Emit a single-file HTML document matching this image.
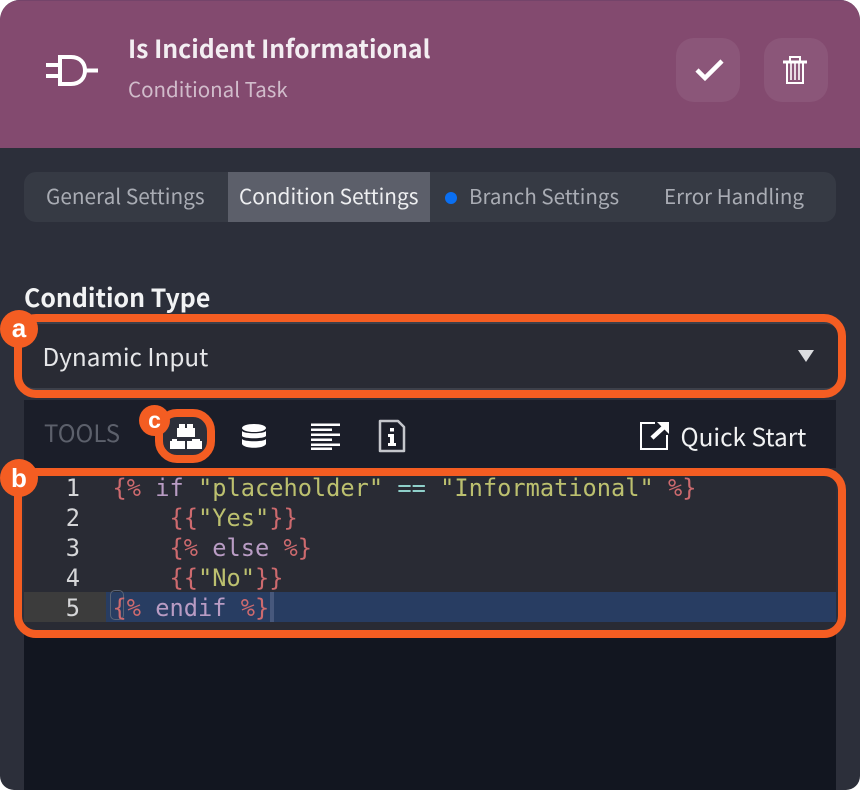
<!DOCTYPE html>
<html><head><meta charset="utf-8"><style>
html,body{margin:0;padding:0;width:860px;height:790px;background:#fff;overflow:hidden}
#p{position:relative;width:860px;height:790px;background:#2c2f3a;border-radius:20px 20px 14px 14px;overflow:hidden;font-family:"Noto Sans CJK JP","Liberation Sans",sans-serif}
#p div,#p svg{position:absolute}
.t{white-space:nowrap;line-height:30px;height:30px}
.m{font-family:"DejaVu Sans Mono","Liberation Mono",monospace;font-size:23.67px;line-height:30px;height:30px;white-space:pre;color:#bcc06f}
.r{color:#cd6a6e}.k{color:#b99cc4}.o{color:#8fd0ca}
.n{font-family:"DejaVu Sans Mono","Liberation Mono",monospace;font-size:23.67px;line-height:30px;height:30px;color:#d5d6d8;width:55px;left:25px;text-align:right}
.b{background:#f45d22;border-radius:50%;color:#fff;text-align:center;font-family:"Liberation Sans",sans-serif;font-weight:700}
</style></head><body><div id="p">
<div style="left:0;top:0;width:860px;height:148px;background:#834a6f;border-top:1px solid #74446a;box-sizing:border-box"></div>
<svg style="left:44px;top:52px" width="56" height="38" viewBox="0 0 56 38" fill="none" stroke="#fff" stroke-width="4"><path d="M16 5H27C36 5 41 11 41 18.500S36 32 27 32H16Z"/><path d="M2 13H16M2 24H16M41 18.500H54"/></svg>
<div class="t" style="left:128px;top:33px;font-size:24.8px;font-weight:700;color:#f3eef2">Is Incident Informational</div>
<div class="t" style="left:128px;top:72.500px;font-size:20.5px;color:#d1bccb">Conditional Task</div>
<div style="left:676px;top:38px;width:64px;height:64px;border-radius:18px;background:rgba(255,255,255,.07)"></div>
<div style="left:764px;top:38px;width:64px;height:64px;border-radius:18px;background:rgba(255,255,255,.07)"></div>
<svg style="left:690px;top:52px" width="38" height="36" viewBox="0 0 38 36" fill="none" stroke="#fff" stroke-width="4.500"><path d="M7 18L15 26L32 9"/></svg>
<svg style="left:780px;top:54px" width="32" height="34" viewBox="0 0 32 34" fill="none" stroke="#fff"><path d="M3 8H27" stroke-width="3"/><path d="M10 7V3H20V7" stroke-width="2"/><path d="M7 8V29H23V8" stroke-width="2"/><path d="M11 9V26M15 9V26M19 9V26" stroke-width="1.600"/></svg>

<div style="left:24px;top:172px;width:812px;height:50px;background:#363a44;border-radius:12px"></div>
<div style="left:228px;top:172px;width:202px;height:50px;background:#5c5f6a"></div>
<div class="t" style="left:46px;top:180px;font-size:20.8px;color:#a9acb4">General Settings</div>
<div class="t" style="left:239px;top:180px;font-size:20.8px;color:#eeeff1">Condition Settings</div>
<div style="left:445px;top:192px;width:12px;height:12px;border-radius:50%;background:#0a6ff2"></div>
<div class="t" style="left:469px;top:180px;font-size:20.5px;color:#a9acb4">Branch Settings</div>
<div class="t" style="left:664px;top:180px;font-size:20.5px;color:#a9acb4">Error Handling</div>

<div class="t" style="left:24px;top:282px;font-size:24.9px;font-weight:700;color:#f2f3f4">Condition Type</div>
<div style="left:22px;top:322px;width:816px;height:68px;background:#292b34;border-top:2px solid #3d404a;border-bottom:2px solid #3d404a;box-sizing:border-box;border-radius:12px"></div>
<div class="t" style="left:42.500px;top:341px;font-size:24.300px;color:#e6e7e9">Dynamic Input</div>
<svg style="left:797px;top:349px" width="18" height="14"><path d="M1 1H17L9 13Z" fill="#dcdde0"/></svg>

<div style="left:24px;top:400px;width:812px;height:68px;background:#1b1e29"></div>
<div class="t" style="left:44px;top:417px;font-size:24px;color:#5c606b">TOOLS</div>
<div style="left:155px;top:409px;width:60px;height:54px;box-sizing:border-box;border:8px solid #f45d22;border-radius:22px;background:#2c2f3a"></div>
<svg style="left:168px;top:421px" width="36" height="30" viewBox="0 0 36 30" fill="#fff"><path d="M9 16V7H11V3H17V7H19V3H25V7H27V16Z"/><path d="M2 28V20H4V18H9V20H17V28Z"/><path d="M19 28V20H24V18H32V20H34V28Z"/></svg>
<svg style="left:240px;top:422px" width="28" height="28" viewBox="0 0 28 28" fill="#fff"><ellipse cx="14" cy="6" rx="12" ry="4"/><path d="M2 9C4 12 24 12 26 9V14C24 17 4 17 2 14Z"/><path d="M2 17C4 20 24 20 26 17V22C24 27 4 27 2 22Z"/></svg>
<svg style="left:310px;top:422px" width="32" height="28" fill="#fff"><path d="M1 1.500H30V4H1ZM1 6.500H22V9H1ZM1 11.500H30V14H1ZM1 16.500H22V19H1ZM1 21.500H30V24H1ZM1 25.500H22V28H1Z"/></svg>
<svg style="left:377px;top:419px" width="30" height="34" viewBox="0 0 30 34" fill="none" stroke="#c5c7cc" stroke-width="2.500"><path d="M3 2H21L27 8V32H3Z" stroke-linejoin="round"/><path d="M13 9H17V12.500H13ZM11 15H17V24H19V27H11V24H13V18H11Z" fill="#fff" stroke="none"/></svg>
<svg style="left:638px;top:420px" width="34" height="32" viewBox="0 0 34 32" fill="none" stroke="#fff"><path d="M17 3H3V29H29V15" stroke-width="2"/><path d="M14 18L26 7" stroke-width="4.500"/><path d="M19 2H31V14Z" fill="#fff" stroke="none"/></svg>
<div class="t" style="left:680.500px;top:421.500px;font-size:24.400px;color:#f1f2f3">Quick Start</div>

<div style="left:24px;top:468px;width:812px;height:322px;background:#121620"></div>
<div style="left:24px;top:468px;width:812px;height:162px;background:#292b34"></div>
<div style="left:24px;top:592px;width:82px;height:30px;background:#3c3c3c"></div>
<div style="left:106px;top:592px;width:730px;height:30px;background:#283d62"></div>
<div style="left:110px;top:590px;width:14px;height:30px;box-sizing:border-box;border:1.500px solid #5b6475;border-radius:5px"></div>
<div style="left:270px;top:592px;width:4px;height:30px;background:#47587c"></div>
<div class="n" style="top:473px">1</div><div class="n" style="top:503px">2</div><div class="n" style="top:533px">3</div><div class="n" style="top:563px">4</div><div class="n" style="top:593px">5</div>
<div class="m" style="left:112.500px;top:473px"><span class="r">{%</span> <span class="k">if</span> "placeholder" <span class="o">==</span> "Informational" <span class="r">%}</span></div>
<div class="m" style="left:112.500px;top:503px">    <span class="r">{{</span>"Yes"<span class="r">}}</span></div>
<div class="m" style="left:112.500px;top:533px">    <span class="r">{%</span> <span class="k">else</span> <span class="r">%}</span></div>
<div class="m" style="left:112.500px;top:563px">    <span class="r">{{</span>"No"<span class="r">}}</span></div>
<div class="m" style="left:112.500px;top:593px"><span class="r">{%</span> <span class="k">endif</span> <span class="r">%}</span></div>

<div style="left:14px;top:314px;width:832px;height:84px;box-sizing:border-box;border:8px solid #f45d22;border-radius:22px"></div>
<div style="left:14px;top:468px;width:832px;height:170px;box-sizing:border-box;border:8px solid #f45d22;border-radius:22px"></div>
<div class="b" style="left:0;top:310px;width:38px;height:38px;font-size:26px;line-height:36px">a</div>
<div class="b" style="left:0;top:459px;width:38px;height:38px;font-size:26px;line-height:38px">b</div>
<div class="b" style="left:139px;top:405px;width:31px;height:31px;font-size:23px;line-height:30px">c</div>
</div></body></html>
